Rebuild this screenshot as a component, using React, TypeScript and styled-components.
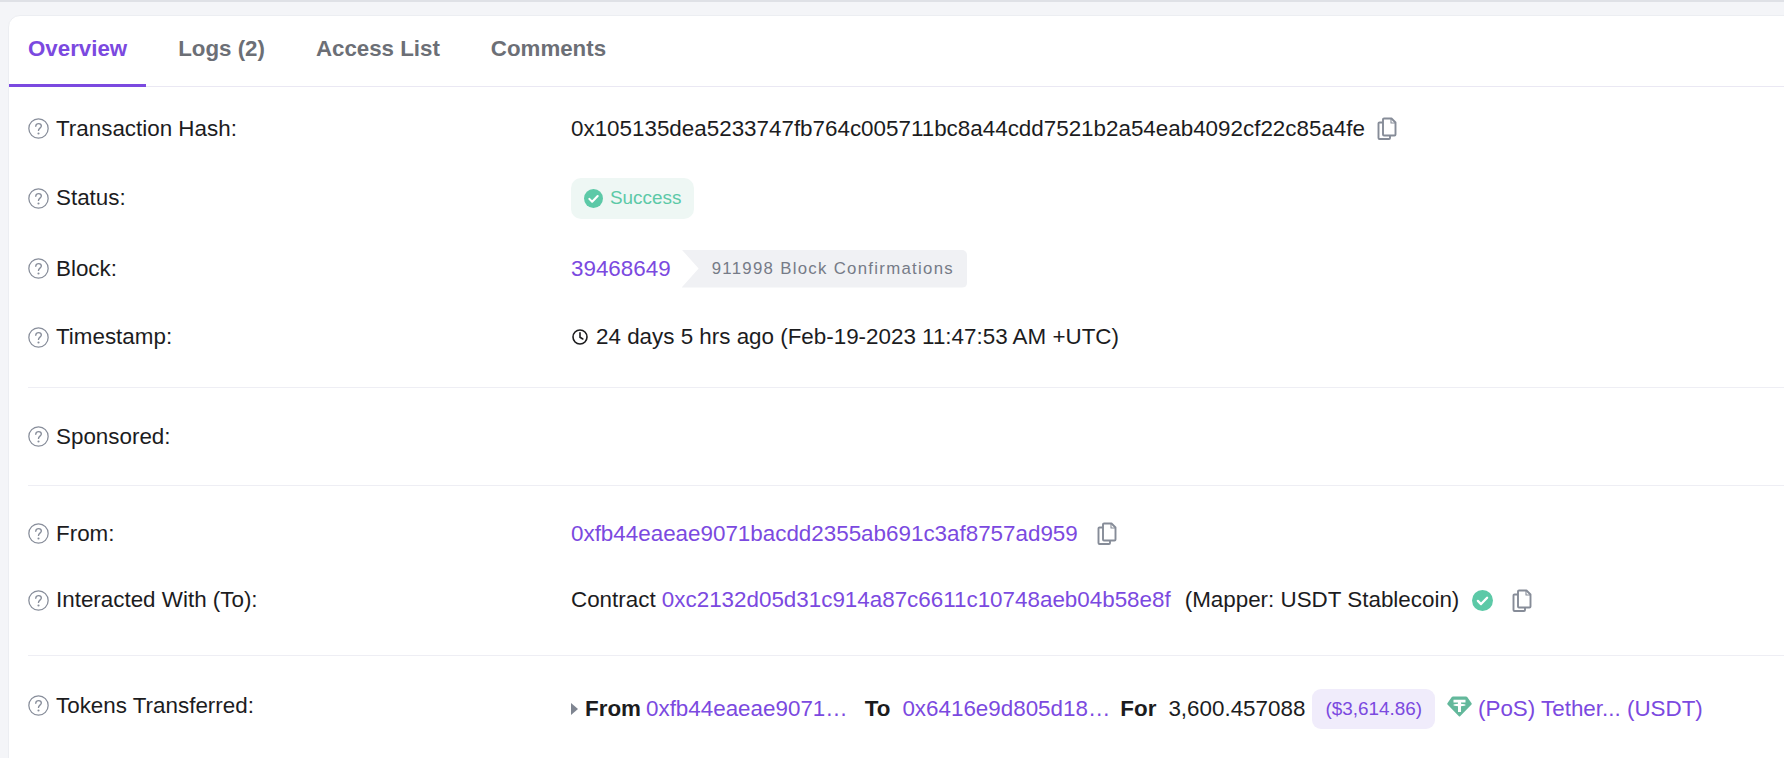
import React from "react";
import styled, { createGlobalStyle } from "styled-components";

const GlobalStyle = createGlobalStyle`
  html, body {
    margin: 0;
    height: 100%;
    overflow: hidden;
    background: #f4f5f8;
  }
  body {
    font-family: "Liberation Sans", Arial, sans-serif;
    color: #1c1c1e;
  }
`;

const TopBar = styled.div`
  height: 2px;
  background: #dfe1e6;
`;

const Page = styled.div`
  padding: 13px 0 0 8px;
`;

const Card = styled.section`
  width: 1800px;
  height: 760px;
  background: #fff;
  border: 1px solid #eceef2;
  border-radius: 12px;
  box-sizing: border-box;
`;

const Tabs = styled.nav`
  display: flex;
  height: 71px;
  border-bottom: 1px solid #eae8f3;
  box-sizing: border-box;
`;

const Tab = styled.a<{ $active?: boolean }>`
  display: flex;
  align-items: center;
  padding: 0 19px ${(p) => (p.$active ? "3px" : "6px")};
  margin-right: 13px;
  height: 71px;
  box-sizing: border-box;
  font-size: 22.3px;
  font-weight: 700;
  color: ${(p) => (p.$active ? "#7b49e0" : "#6c6f76")};
  border-bottom: ${(p) => (p.$active ? "3px solid #7b49e0" : "none")};
`;

const Body = styled.div`
  padding: 7px 0 0 19px;
`;

const Row = styled.div<{ $h: number; $top?: number }>`
  display: grid;
  grid-template-columns: 543px 1fr;
  align-items: center;
  height: ${(p) => p.$h}px;
  margin-top: ${(p) => p.$top ?? 0}px;
  font-size: 22.4px;
`;

const Label = styled.div`
  display: flex;
  align-items: center;
  gap: 7px;
`;

const Value = styled.div<{ $shift?: number }>`
  display: flex;
  align-items: center;
  white-space: pre;
  padding-top: ${(p) => p.$shift ?? 0}px;
`;

const Link = styled.a`
  color: #7b49e0;
`;

const Note = styled.span`
  margin-left: 14px;
`;

const Divider = styled.hr<{ $top?: number }>`
  margin: ${(p) => p.$top ?? 0}px 0 0;
  border: 0;
  border-top: 1px solid #eeeef4;
`;

const Pill = styled.span`
  display: inline-flex;
  align-items: center;
  gap: 7px;
  height: 41px;
  padding: 0 13px;
  border-radius: 10px;
  background: #eef7f4;
  color: #5cc9a7;
  font-size: 18.9px;
`;

const Confirmations = styled.span`
  display: flex;
  align-items: center;
  height: 38px;
  margin-left: 11px;
  padding: 0 13px 0 30px;
  background: #f0f1f4;
  color: #767b87;
  font-size: 16.8px;
  letter-spacing: 1.3px;
  border-radius: 0 5px 5px 0;
  clip-path: polygon(0 0, 100% 0, 100% 100%, 0 100%, 17px 50%);
`;

const Price = styled.span`
  display: inline-flex;
  align-items: center;
  height: 40px;
  padding: 0 13px;
  margin: 0 12px 0 7px;
  border-radius: 9px;
  background: #f0ecfb;
  color: #7b49e0;
  font-size: 18.9px;
`;

const Bold = styled.b<{ $l?: number; $r?: number }>`
  font-weight: 700;
  margin-left: ${(p) => p.$l ?? 0}px;
  margin-right: ${(p) => p.$r ?? 0}px;
`;

const IconSlot = styled.span<{ $l?: number; $r?: number; $up?: number }>`
  display: inline-flex;
  margin-left: ${(p) => p.$l ?? 0}px;
  margin-right: ${(p) => p.$r ?? 0}px;
  margin-bottom: ${(p) => p.$up ?? 0}px;
`;

const Help = () => (
  <svg width="21" height="21" viewBox="0 0 20 20" fill="none">
    <circle cx="10" cy="10" r="9.2" stroke="#878d9a" strokeWidth="1.2" />
    <path d="M7.4 7.9c0-1.6 1.2-2.6 2.7-2.6s2.6 1 2.6 2.3c0 2-2.7 2.1-2.7 4.2" stroke="#878d9a" strokeWidth="1.3" strokeLinecap="round" />
    <circle cx="10" cy="14.7" r="1" fill="#878d9a" />
  </svg>
);

const Copy = () => (
  <svg width="20" height="23" viewBox="0 0 20 23" fill="none" stroke="#868c98" strokeWidth="1.9" strokeLinejoin="round">
    <path d="M7 1.5h7.5l4 4v12a1 1 0 0 1-1 1H7a1 1 0 0 1-1-1v-15a1 1 0 0 1 1-1z" />
    <path d="M14 1.5V6h4.5" strokeWidth="1.1" />
    <path d="M6 5.5H2.5a1 1 0 0 0-1 1V21a1 1 0 0 0 1 1H12a1 1 0 0 0 1-1v-2.5" />
  </svg>
);

const Check = ({ size }: { size: number }) => (
  <svg width={size} height={size} viewBox="0 0 20 20">
    <circle cx="10" cy="10" r="10" fill="#5cc9a7" />
    <path d="M5.6 10.4l3 3 5.8-6" fill="none" stroke="#fff" strokeWidth="2.2" strokeLinecap="round" strokeLinejoin="round" />
  </svg>
);

const Clock = () => (
  <svg width="16" height="16" viewBox="0 0 16 16" fill="none" stroke="#1c1c1e" strokeWidth="1.6">
    <circle cx="8" cy="8" r="7" />
    <path d="M8 3.8v4.4l2.8 1.8" strokeLinecap="round" />
  </svg>
);

const Caret = () => (
  <svg width="7" height="12" viewBox="0 0 7 12">
    <path d="M0 0l7 6-7 6z" fill="#7f8591" />
  </svg>
);

const Tether = () => (
  <svg width="25" height="21" viewBox="0 0 25 21">
    <path d="M6 .5h13c.5 0 .9.2 1.2.6l4.4 6.2c.3.4.2.9-.1 1.2L13.1 20.2c-.3.3-.9.3-1.2 0L.5 8.5c-.3-.3-.4-.8-.1-1.2L4.800 1.100C5.100.7 5.500.5 6 .5z" fill="#63b89b" />
    <path d="M6.5 3.8h12v2.600h-4.500v1.400c2.600.1 4.600.6 4.600 1.200s-2 1.100-4.600 1.200V16h-3V10.200c-2.600-.1-4.600-.6-4.600-1.200s2-1.100 4.600-1.200V6.400H6.500z" fill="#fff" />
  </svg>
);

const HelpLabel = ({ children }: { children: React.ReactNode }) => (
  <Label>
    <Help />
    {children}
  </Label>
);

export default function App() {
  return (
    <>
      <GlobalStyle />
      <TopBar />
      <Page>
        <Card>
          <Tabs>
            <Tab $active>Overview</Tab>
            <Tab>Logs (2)</Tab>
            <Tab>Access List</Tab>
            <Tab>Comments</Tab>
          </Tabs>
          <Body>
            <Row $h={69}>
              <HelpLabel>Transaction Hash:</HelpLabel>
              <Value>
                0x105135dea5233747fb764c005711bc8a44cdd7521b2a54eab4092cf22c85a4fe
                <IconSlot $l={12}><Copy /></IconSlot>
              </Value>
            </Row>
            <Row $h={70}>
              <HelpLabel>Status:</HelpLabel>
              <Value>
                <Pill><Check size={19} />Success</Pill>
              </Value>
            </Row>
            <Row $h={71}>
              <HelpLabel>Block:</HelpLabel>
              <Value>
                <Link>39468649</Link>
                <Confirmations>911998 Block Confirmations</Confirmations>
              </Value>
            </Row>
            <Row $h={66}>
              <HelpLabel>Timestamp:</HelpLabel>
              <Value>
                <IconSlot $l={1} $r={8}><Clock /></IconSlot>
                24 days 5 hrs ago (Feb-19-2023 11:47:53 AM +UTC)
              </Value>
            </Row>
            <Divider $top={17} />
            <Row $h={97}>
              <HelpLabel>Sponsored:</HelpLabel>
              <Value />
            </Row>
            <Divider />
            <Row $h={67} $top={14}>
              <HelpLabel>From:</HelpLabel>
              <Value>
                <Link>0xfb44eaeae9071bacdd2355ab691c3af8757ad959</Link>
                <IconSlot $l={19}><Copy /></IconSlot>
              </Value>
            </Row>
            <Row $h={66}>
              <HelpLabel>Interacted With (To):</HelpLabel>
              <Value>
                Contract <Link>0xc2132d05d31c914a87c6611c10748aeb04b58e8f</Link>
                <Note>(Mapper: USDT Stablecoin)</Note>
                <IconSlot $l={13}><Check size={21} /></IconSlot>
                <IconSlot $l={19}><Copy /></IconSlot>
              </Value>
            </Row>
            <Divider $top={22} />
            <Row $h={99}>
              <HelpLabel>Tokens Transferred:</HelpLabel>
              <Value $shift={6}>
                <IconSlot $r={7}><Caret /></IconSlot>
                <Bold $r={5}>From</Bold>
                <Link>0xfb44eaeae9071…</Link>
                <Bold $l={17} $r={12}>To</Bold>
                <Link>0x6416e9d805d18…</Link>
                <Bold $l={10} $r={12}>For</Bold>
                3,600.457088
                <Price>($3,614.86)</Price>
                <IconSlot $r={6} $up={5}><Tether /></IconSlot>
                <Link>(PoS) Tether... (USDT)</Link>
              </Value>
            </Row>
          </Body>
        </Card>
      </Page>
    </>
  );
}
